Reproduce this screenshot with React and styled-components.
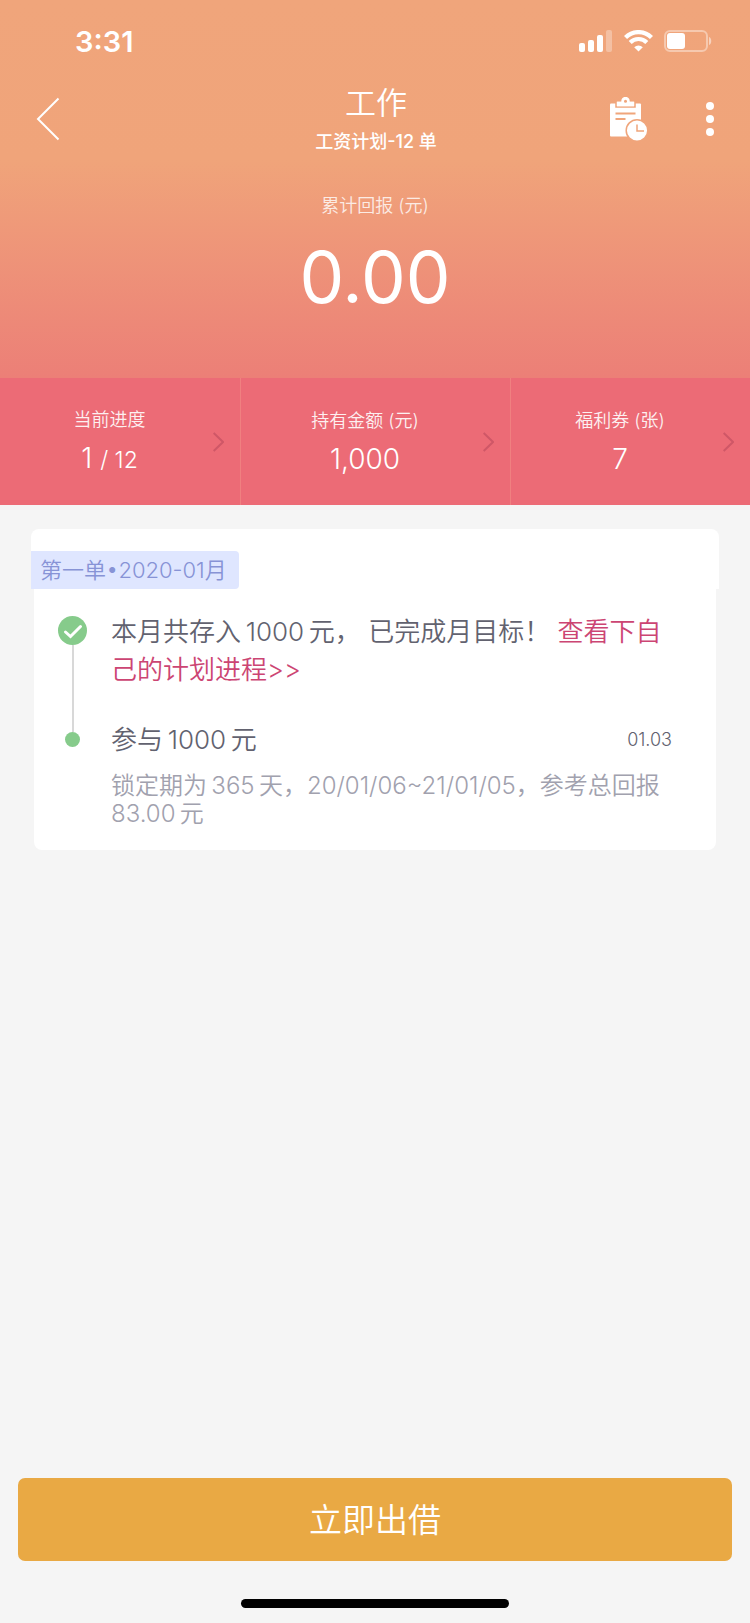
import React from "react";
import styled, { createGlobalStyle } from "styled-components";

const GlobalStyle = createGlobalStyle`
  * {
    box-sizing: border-box;
  }
  body {
    margin: 0;
    background: #f5f5f5;
    font-family: Inter, "Noto Sans CJK SC", sans-serif;
    font-weight: 350;
  }
  button {
    border: 0;
    padding: 0;
    background: none;
    color: inherit;
    font: inherit;
    cursor: pointer;
  }
  h1, h2, p {
    margin: 0;
    font-weight: inherit;
  }
  svg {
    display: block;
  }
`;

const Page = styled.div`
  min-height: 100vh;
  display: flex;
  flex-direction: column;
`;

const Header = styled.header`
  height: 378px;
  color: #fff;
  background: linear-gradient(#f0a57b 0, #f0a47a 160px, #ec7f77 100%);
`;

const StatusBar = styled.div`
  height: 80px;
  padding: 2px 38px 0 75px;
  display: flex;
  align-items: center;
  justify-content: space-between;
`;

const Time = styled.span`
  font-size: 29px;
  font-weight: 600;
`;

const StatusIcons = styled.div`
  display: flex;
  align-items: center;
  gap: 11px;
`;

const NavBar = styled.nav`
  height: 78px;
  padding: 0 34px 0 36px;
  display: grid;
  grid-template-columns: 1fr auto 1fr;
  align-items: center;
`;

const NavActions = styled.div`
  display: flex;
  align-items: center;
  justify-content: flex-end;
  gap: 56px;
`;

const BackButton = styled.button`
  justify-self: start;
`;

const Titles = styled.div`
  text-align: center;
  h1 {
    font-size: 31px;
    line-height: 46px;
  }
  p {
    font-size: 18px;
    line-height: 32px;
    font-weight: 500;
  }
`;

const Total = styled.section`
  padding-top: 35px;
  text-align: center;
  h2 {
    font-size: 18px;
    line-height: 26px;
    opacity: 0.8;
  }
  p {
    font-size: 71px;
    line-height: 88px;
    padding-top: 14px;
    font-weight: 400;
  }
`;

const Stats = styled.section`
  display: grid;
  grid-template-columns: 8fr 9fr 8fr;
  background: #ec6b76;
  color: #fff;
`;

const StatButton = styled.button`
  height: 127px;
  padding: 0 16px 0 6px;
  display: flex;
  align-items: center;
  & + & {
    border-left: 1px solid #f08080;
  }
`;

const StatText = styled.span`
  flex: 1;
  display: flex;
  flex-direction: column;
  align-items: center;
`;

const StatLabel = styled.span`
  font-size: 18px;
  line-height: 34px;
  opacity: 0.9;
`;

const StatValue = styled.span`
  font-size: 28px;
  line-height: 42px;
  small {
    font-size: 23px;
  }
`;

const Order = styled.main`
  padding: 24px 31px;
`;

const OrderHead = styled.div`
  height: 60px;
  padding-top: 22px;
  background: #fff;
  border-radius: 8px 8px 0 0;
`;

const OrderTag = styled.h2`
  width: fit-content;
  padding: 0 12px 0 9px;
  font-size: 22px;
  line-height: 38px;
  color: #8793d6;
  background: #dfe6ff;
  border-radius: 0 4px 4px 0;
`;

const Timeline = styled.div`
  margin: 0 3px;
  padding: 24px 44px 22px 24px;
  background: #fff;
  border-radius: 0 0 8px 8px;
`;

const Entry = styled.div`
  display: grid;
  grid-template-columns: 29px 1fr;
  column-gap: 24px;
`;

const Marker = styled.div`
  display: flex;
  flex-direction: column;
  align-items: center;
`;

const CheckMark = styled.svg`
  margin-top: 3px;
  flex: none;
`;

const Line = styled.span`
  flex: 1;
  width: 2px;
  background: #d8d8d8;
`;

const Dot = styled.span`
  width: 15px;
  height: 15px;
  margin-bottom: 12px;
  border-radius: 50%;
  background: #86cb8b;
`;

const Summary = styled.p`
  padding-bottom: 32px;
  font-size: 26px;
  line-height: 38px;
  color: #62626f;
  a {
    color: #cc4573;
    text-decoration: none;
  }
`;

const EntryTop = styled.div`
  display: flex;
  align-items: center;
  justify-content: space-between;
  font-size: 26px;
  line-height: 38px;
  color: #62626f;
  time {
    font-size: 18px;
  }
`;

const Detail = styled.p`
  padding-top: 13px;
  font-size: 24px;
  line-height: 28px;
  color: #a1a1ae;
`;

const Footer = styled.footer`
  margin-top: auto;
  padding: 0 18px 15px;
`;

const LendButton = styled.button`
  width: 100%;
  height: 83px;
  padding-bottom: 3px;
  border-radius: 7px;
  background: #e9a944;
  color: #fff;
  font-size: 33px;
`;

const HomeIndicator = styled.div`
  width: 268px;
  height: 9px;
  margin: 38px auto 0;
  border-radius: 5px;
  background: #000;
`;

const SignalIcon = () => (
  <svg width="34" height="22" fill="#fff">
    <rect x="0" y="13" width="6" height="9" rx="2" />
    <rect x="9" y="10" width="6" height="12" rx="2" />
    <rect x="18" y="5" width="6" height="17" rx="2" />
    <rect x="27" y="0" width="6" height="22" rx="2" opacity="0.3" />
  </svg>
);

const WifiIcon = () => (
  <svg width="29" height="22" viewBox="0 0 29 22" fill="none" stroke="#fff">
    <path d="M1.500 7.500a18.500 18.500 0 0 1 26 0" strokeWidth="4.400" />
    <path d="M6.200 12.400a11.800 11.800 0 0 1 16.600 0" strokeWidth="4.200" />
    <path
      d="M14.500 21.500 10.200 17.200a6.200 6.200 0 0 1 8.600 0z"
      fill="#fff"
      stroke="none"
    />
  </svg>
);

const BatteryIcon = () => (
  <svg width="48" height="22" viewBox="0 0 48 22">
    <rect
      x="1"
      y="1"
      width="42"
      height="20"
      rx="5"
      fill="none"
      stroke="#fff"
      strokeOpacity="0.4"
      strokeWidth="2"
    />
    <path d="M45 7c3 1 3 7 0 8z" fill="#fff" fillOpacity="0.5" />
    <rect x="3" y="3" width="18" height="16" rx="3" fill="#fff" />
  </svg>
);

const BackIcon = () => (
  <svg width="24" height="44" viewBox="0 0 24 44">
    <path
      d="M22.500 1.500 2 22l20.500 20.500"
      fill="none"
      stroke="#fff"
      strokeWidth="2"
    />
  </svg>
);

const RecordIcon = () => (
  <svg width="38" height="44" viewBox="0 0 38 44">
    <rect x="0" y="6.500" width="31" height="33" rx="1" fill="#fff" />
    <path
      d="M6 4h6a4 4 0 0 1 7 0h6v6H6z"
      fill="#fff"
      stroke="#f0a57b"
      strokeWidth="1.500"
    />
    <path
      d="M7 4.800h4.300V4a4.200 4.200 0 0 1 8.400 0v.8H24v4.400H7z"
      fill="#fff"
    />
    <circle cx="15.500" cy="4.300" r="1.500" fill="#f0a57b" />
    <path d="M5.500 16.500h20M5.500 22h10" stroke="#f0a57b" strokeWidth="2" />
    <circle
      cx="27"
      cy="33.500"
      r="10.800"
      fill="#fff"
      stroke="#f0a57b"
      strokeWidth="1.500"
    />
    <path
      d="M27 27.500v6.500h7"
      fill="none"
      stroke="#f0a57b"
      strokeWidth="1.500"
    />
  </svg>
);

const MoreIcon = () => (
  <svg width="12" height="36" fill="#fff">
    <circle cx="6" cy="5" r="4" />
    <circle cx="6" cy="18" r="4" />
    <circle cx="6" cy="31" r="4" />
  </svg>
);

const ArrowIcon = () => (
  <svg width="11" height="20" viewBox="0 0 11 20">
    <path d="M.7 1 10 10 .7 19" fill="none" stroke="#cf5767" strokeWidth="2" />
  </svg>
);

const Stat = ({ label, children }) => (
  <StatButton type="button">
    <StatText>
      <StatLabel>{label}</StatLabel>
      <StatValue>{children}</StatValue>
    </StatText>
    <ArrowIcon />
  </StatButton>
);

const App = () => (
  <Page>
    <GlobalStyle />
    <Header>
      <StatusBar>
        <Time>3:31</Time>
        <StatusIcons>
          <SignalIcon />
          <WifiIcon />
          <BatteryIcon />
        </StatusIcons>
      </StatusBar>
      <NavBar>
        <BackButton type="button" aria-label="返回">
          <BackIcon />
        </BackButton>
        <Titles>
          <h1>工作</h1>
          <p>工资计划-12 单</p>
        </Titles>
        <NavActions>
          <button type="button" aria-label="记录">
            <RecordIcon />
          </button>
          <button type="button" aria-label="更多">
            <MoreIcon />
          </button>
        </NavActions>
      </NavBar>
      <Total>
        <h2>累计回报 (元)</h2>
        <p>0.00</p>
      </Total>
    </Header>

    <Stats>
      <Stat label="当前进度">
        1 <small>/ 12</small>
      </Stat>
      <Stat label="持有金额 (元)">1,000</Stat>
      <Stat label="福利券 (张)">7</Stat>
    </Stats>

    <Order>
      <OrderHead>
        <OrderTag>第一单•2020-01月</OrderTag>
      </OrderHead>
      <Timeline>
        <Entry>
          <Marker>
            <CheckMark width="29" height="29" viewBox="0 0 29 29">
              <circle cx="14.500" cy="14.500" r="14.500" fill="#86cb8b" />
              <path
                d="M7.500 16l5 4.500L22.500 10.500"
                fill="none"
                stroke="#fff"
                strokeWidth="3"
                strokeLinecap="round"
              />
            </CheckMark>
            <Line />
          </Marker>
          <Summary>
            本月共存入&thinsp;1000&thinsp;元， 已完成月目标！{" "}
            <a href="#plan">查看下自己的计划进程&gt;&gt;</a>
          </Summary>
        </Entry>
        <Entry>
          <Marker>
            <Line />
            <Dot />
          </Marker>
          <EntryTop>
            <span>参与&thinsp;1000&thinsp;元</span>
            <time dateTime="2020-01-03">01.03</time>
          </EntryTop>
        </Entry>
        <Entry>
          <Marker />
          <Detail>
            锁定期为&thinsp;365&thinsp;天，20/01/06~21/01/05，参考总回报83.00&thinsp;元
          </Detail>
        </Entry>
      </Timeline>
    </Order>

    <Footer>
      <LendButton type="button">立即出借</LendButton>
      <HomeIndicator />
    </Footer>
  </Page>
);

export default App;
